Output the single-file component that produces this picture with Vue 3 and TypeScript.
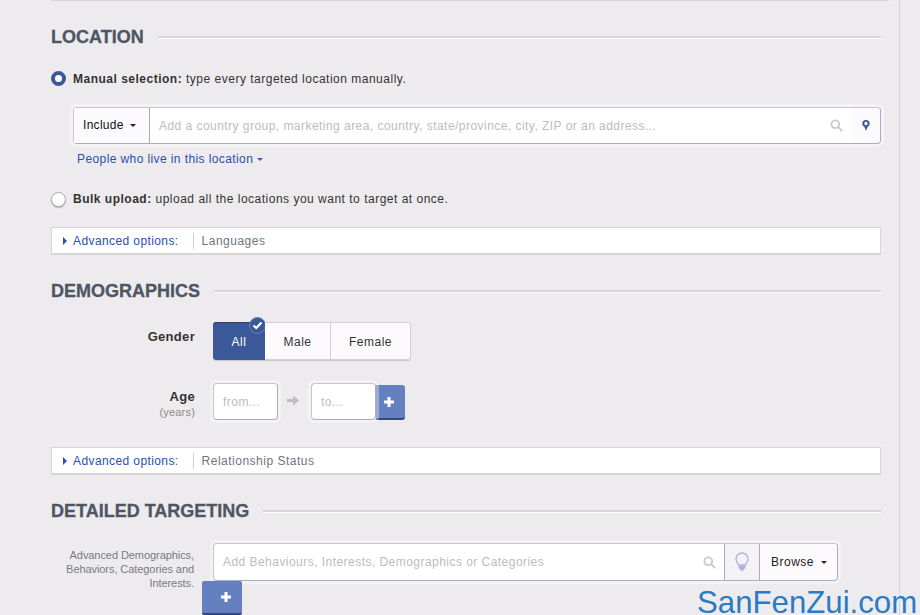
<script setup lang="ts">
const genders = ['Male', 'Female'];
</script>

<template>
  <div class="page">
    <div class="frame">
      <div class="column">
        <div class="section-head first"><h2>LOCATION</h2><span class="rule"></span></div>

        <div class="radio-row manual">
          <span class="radio on"></span>
          <span><b>Manual selection:</b> type every targeted location manually.</span>
        </div>

        <div class="halo loc-halo">
          <div class="group">
            <div class="include">Include <i class="caret dark"></i></div>
            <div class="placeholder grow">Add a country group, marketing area, country, state/province, city, ZIP or an address...</div>
            <svg class="search" width="13" height="13" viewBox="0 0 14 14"><circle cx="5.7" cy="5.7" r="4.2" fill="none" stroke="#c9c9c9" stroke-width="2" /><path d="M8.8 8.8L13 13" stroke="#c9c9c9" stroke-width="2" /></svg>
            <div class="pin-box">
              <svg width="8" height="11" viewBox="0 0 8 11"><path fill-rule="evenodd" d="M4 0a3.7 3.7 0 0 1 3.7 3.7c0 1.5-.9 2.5-2 3L4 11 2.300 6.700C1.200 6.200.3 5.200.3 3.700A3.700 3.700 0 0 1 4 0zm0 1.800a1.700 1.700 0 1 0 0 3.400 1.700 1.700 0 0 0 0-3.400z" fill="#3b5998" /></svg>
            </div>
          </div>
        </div>
        <a class="link people">People who live in this location <i class="caret blue"></i></a>

        <div class="radio-row bulk">
          <span class="radio"></span>
          <span><b>Bulk upload:</b> upload all the locations you want to target at once.</span>
        </div>

        <div class="advanced">
          <i class="tri"></i><a class="link">Advanced options:</a><span class="adv-text">Languages</span>
        </div>

        <div class="section-head demo"><h2>DEMOGRAPHICS</h2><span class="rule"></span></div>

        <div class="field gender">
          <div class="label strong">Gender</div>
          <div class="seg">
            <div class="seg-btn active">
              All
              <span class="check">
                <svg width="11" height="9" viewBox="0 0 11 9"><path d="M1.500 4.500L4.200 7L9.500 1.500" fill="none" stroke="#fff" stroke-width="2.200" /></svg>
              </span>
            </div>
            <div v-for="g in genders" :key="g" class="seg-btn" :class="g.toLowerCase()">{{ g }}</div>
          </div>
        </div>

        <div class="field age">
          <div class="label strong age-label">Age<small>(years)</small></div>
          <div class="halo small-halo"><div class="age-input placeholder">from...</div></div>
          <svg class="arrow" width="12" height="11" viewBox="0 0 12 11"><path d="M0 4h6V0.500L12 5.500L6 10.500V7H0z" fill="#bdbdbd" /></svg>
          <div class="halo small-halo to"><div class="age-input placeholder">to...</div></div>
          <div class="plus age-plus">
            <svg width="10" height="10" viewBox="0 0 10 10"><path d="M3.500 0h3v3.500H10v3H6.500V10h-3V6.500H0v-3h3.500z" fill="#fff" /></svg>
          </div>
        </div>

        <div class="advanced adv2">
          <i class="tri"></i><a class="link">Advanced options:</a><span class="adv-text">Relationship Status</span>
        </div>

        <div class="section-head detail"><h2>DETAILED TARGETING</h2><span class="rule"></span></div>

        <div class="field detailed">
          <div class="label note">Advanced Demographics, Behaviors, Categories and Interests.</div>
          <div class="detail-col">
            <div class="halo detail-halo">
              <div class="group tall">
                <div class="placeholder grow detail-ph">Add Behaviours, Interests, Demographics or Categories</div>
                <svg class="search s2" width="13" height="13" viewBox="0 0 14 14"><circle cx="5.7" cy="5.700" r="4.200" fill="none" stroke="#c9c9c9" stroke-width="2" /><path d="M8.800 8.800L13 13" stroke="#c9c9c9" stroke-width="2" /></svg>
                <div class="bulb">
                  <svg width="14" height="20" viewBox="0 0 14 20"><path d="M7 1a6 6 0 0 1 6 6c0 2.500-2 3.800-2.500 6h-7C3 10.800 1 9.500 1 7a6 6 0 0 1 6-6z" fill="#f4f1f7" stroke="#a9b5dc" stroke-width="1.400" /><path d="M3.500 13.500h7V16L7 19.500L3.500 16z" fill="#a9b5dc" /></svg>
                </div>
                <div class="browse">Browse <i class="caret dark"></i></div>
              </div>
            </div>
            <div class="plus detail-plus">
              <svg width="10" height="10" viewBox="0 0 10 10"><path d="M3.500 0h3v3.500H10v3H6.500V10h-3V6.500H0v-3h3.500z" fill="#fff" /></svg>
            </div>
          </div>
        </div>
      </div>
    </div>
    <div class="watermark">SanFenZui.com</div>
  </div>
</template>

<style>
html, body { margin: 0; padding: 0; background: #eeebee; }
</style>

<style scoped>
.page {
  position: relative;
  width: 920px;
  height: 615px;
  overflow: hidden;
  background: #eeebee;
  font-family: "Liberation Sans", Arial, sans-serif;
  font-size: 12px;
  letter-spacing: 0.5px;
  color: #333;
  box-sizing: border-box;
}
.frame {
  width: 900px;
  height: 615px;
  box-sizing: border-box;
  border-right: 1px solid #d6d4d6;
  padding-left: 51px;
}
.column {
  width: 838px;
  height: 615px;
  box-sizing: border-box;
  border-top: 1px solid #d8d5d8;
  padding-right: 8px;
}
.section-head {
  display: flex;
  align-items: center;
  height: 22px;
}
.section-head h2 {
  margin: 0 14px 0 0;
  font-size: 18px;
  line-height: 22px;
  font-weight: 700;
  letter-spacing: 0;
  color: #4e5665;
  -webkit-text-stroke: 0.3px #4e5665;
}
.rule {
  flex: 1;
  height: 2px;
  background: #d8d5d8;
  border-bottom: 1px solid #fff;
}
.first { margin-top: 25px; }
.radio-row {
  display: flex;
  align-items: center;
  gap: 7px;
  height: 16px;
  line-height: 16px;
  color: #333;
}
.radio-row b { color: #333; }
.manual { margin-top: 23px; }
.bulk { margin-top: 24px; }
.radio {
  width: 15px;
  height: 15px;
  box-sizing: border-box;
  border-radius: 50%;
  background: #fff;
  border: 1px solid #aaa;
  box-shadow: 0 1px 1px rgba(0,0,0,.25);
}
.radio.on {
  border: 4px solid #3b5998;
  box-shadow: none;
  margin-top: -2px;
}
.halo {
  padding: 3px;
  border-radius: 6px;
  background: rgba(255,255,255,.35);
}
.loc-halo { margin: 17px -3px 0 19px; width: 814px; box-sizing: border-box; }
.group {
  display: flex;
  align-items: center;
  height: 37px;
  box-sizing: border-box;
  background: #fff;
  border: 1px solid #a6adbd;
  border-top-color: #c4c6cc;
  border-left-color: #c4c6cc;
  border-radius: 4px;
}
.include {
  width: 76px;
  height: 100%;
  box-sizing: border-box;
  padding-left: 9px;
  line-height: 35px;
  color: #111;
  letter-spacing: 0.3px;
  border-right: 1px solid #a6adbd;
  background: #fdfafd;
}
.placeholder { color: #bcbcbc; letter-spacing: 0.46px; }
.grow { flex: 1; padding-left: 9px; white-space: nowrap; overflow: hidden; }
.search { margin-right: 10px; flex: none; }
.pin-box {
  width: 27px;
  height: 100%;
  display: flex;
  align-items: center;
  justify-content: center;
  padding-right: 1px;
  box-sizing: border-box;
  background: #fdfafd;
  border-radius: 0 4px 4px 0;
}
.caret {
  display: inline-block;
  width: 0;
  height: 0;
  margin-left: 3px;
  vertical-align: 2px;
  border-left: 3.500px solid transparent;
  border-right: 3.500px solid transparent;
  border-top: 3.500px solid #222;
}
.caret.blue { border-top-color: #3b5fb5; margin-left: 0; }
.link { color: #2a4fb0; letter-spacing: 0.4px; }
.people { display: block; margin: 4px 0 0 26px; height: 16px; line-height: 16px; }
.advanced {
  display: flex;
  align-items: center;
  height: 28px;
  margin-top: 20px;
  width: 830px;
  box-sizing: border-box;
  background: #fff;
  border: 1px solid #d8d6d8;
  border-bottom: 2px solid #d8d6d8;
  padding-left: 11px;
}
.tri {
  width: 0;
  height: 0;
  border-top: 4px solid transparent;
  border-bottom: 4px solid transparent;
  border-left: 4px solid #2a4fb0;
  margin-right: 6px;
}
.adv-text {
  margin-left: 14px;
  padding-left: 8px;
  border-left: 1px solid #d0ced0;
  line-height: 16px;
  color: #6f7580;
}
.demo { margin-top: 25px; }
.field { display: flex; }
.label {
  width: 144px;
  margin-right: 18px;
  text-align: right;
  flex: none;
}
.strong { font-weight: 700; font-size: 13px; letter-spacing: 0.3px; color: #333; }
.gender { margin-top: 20px; }
.gender .label { padding-top: 7px; line-height: 16px; }
.seg {
  display: flex;
  height: 38px;
  box-sizing: border-box;
  background: #fff;
  border-radius: 3px;
  box-shadow: 0 1px 0 #c9c7c9;
}
.seg-btn {
  position: relative;
  box-sizing: border-box;
  height: 38px;
  line-height: 38px;
  text-align: center;
  color: #333;
  background: #fdfafd;
  border: 1px solid #d0d0d3;
  border-left: 0;
}
.seg-btn.active {
  width: 52px;
  background: #3b5998;
  color: #fff;
  border: 0;
  border-top: 1px solid #2d3f6b;
  border-radius: 3px 0 0 3px;
}
.seg-btn.male { width: 66px; }
.seg-btn.female { width: 80px; border-radius: 0 3px 3px 0; }
.check {
  position: absolute;
  top: -6px;
  right: -1px;
  width: 17px;
  height: 17px;
  box-sizing: border-box;
  border-radius: 50%;
  background: #3b5998;
  border: 1px solid #6580bd;
  display: flex;
  align-items: center;
  justify-content: center;
}
.age { margin-top: 23px; align-items: flex-start; }
.age-label { line-height: 16px; padding-top: 6px; }
.age-label small {
  display: block;
  font-weight: 400;
  font-size: 11px;
  line-height: 14px;
  color: #8a8a8a;
  letter-spacing: 0.2px;
}
.small-halo { margin: -3px; }
.age-input {
  width: 65px;
  height: 37px;
  box-sizing: border-box;
  line-height: 37px;
  padding-left: 9px;
  background: #fff;
  border: 1px solid #a6adbd;
  border-top-color: #c4c6cc;
  border-left-color: #c4c6cc;
  border-radius: 4px;
}
.arrow { margin: 12px 12px 0 9px; flex: none; }
.small-halo.to { position: relative; z-index: 1; }
.plus {
  box-sizing: border-box;
  background: #6480c0;
  border-bottom: 2px solid #32497f;
  border-radius: 0 3px 3px 0;
  display: flex;
  align-items: center;
  justify-content: center;
}
.age-plus { width: 29px; height: 35px; margin: 2px 0 0 0; padding-right: 3px; }
.adv2 { margin-top: 27px; }
.detail { margin-top: 25px; }
.detailed { margin-top: 21px; }
.note {
  width: 143px;
  margin-right: 19px;
  font-size: 11px;
  line-height: 14px;
  letter-spacing: -0.07px;
  color: #777b85;
  padding-top: 5px;
}
.detail-col { width: 625px; }
.detail-halo { margin: -3px; position: relative; z-index: 1; }
.tall { height: 38px; }
.s2 { margin-right: 8px; }
.bulb {
  width: 34px;
  height: 100%;
  box-sizing: content-box;
  background: #f4f1f7;
  border-left: 1px solid #a6adbd;
  border-right: 1px solid #a6adbd;
  display: flex;
  align-items: center;
  justify-content: center;
}
.browse {
  width: 77px;
  height: 100%;
  box-sizing: border-box;
  padding-left: 11px;
  line-height: 36px;
  color: #222;
  letter-spacing: 0.5px;
  background: #fdfafd;
  border-radius: 0 4px 4px 0;
}
.detail-plus {
  width: 40px;
  height: 34px;
  margin: 0 0 0 -11px;
  padding-left: 8px;
  border-radius: 2px;
  position: relative;
  z-index: 2;
}
.watermark {
  position: absolute;
  left: 697px;
  top: 590px;
  font-size: 31.200px;
  line-height: 25px;
  letter-spacing: 0;
  color: #2a7bc3;
  white-space: nowrap;
}
</style>
